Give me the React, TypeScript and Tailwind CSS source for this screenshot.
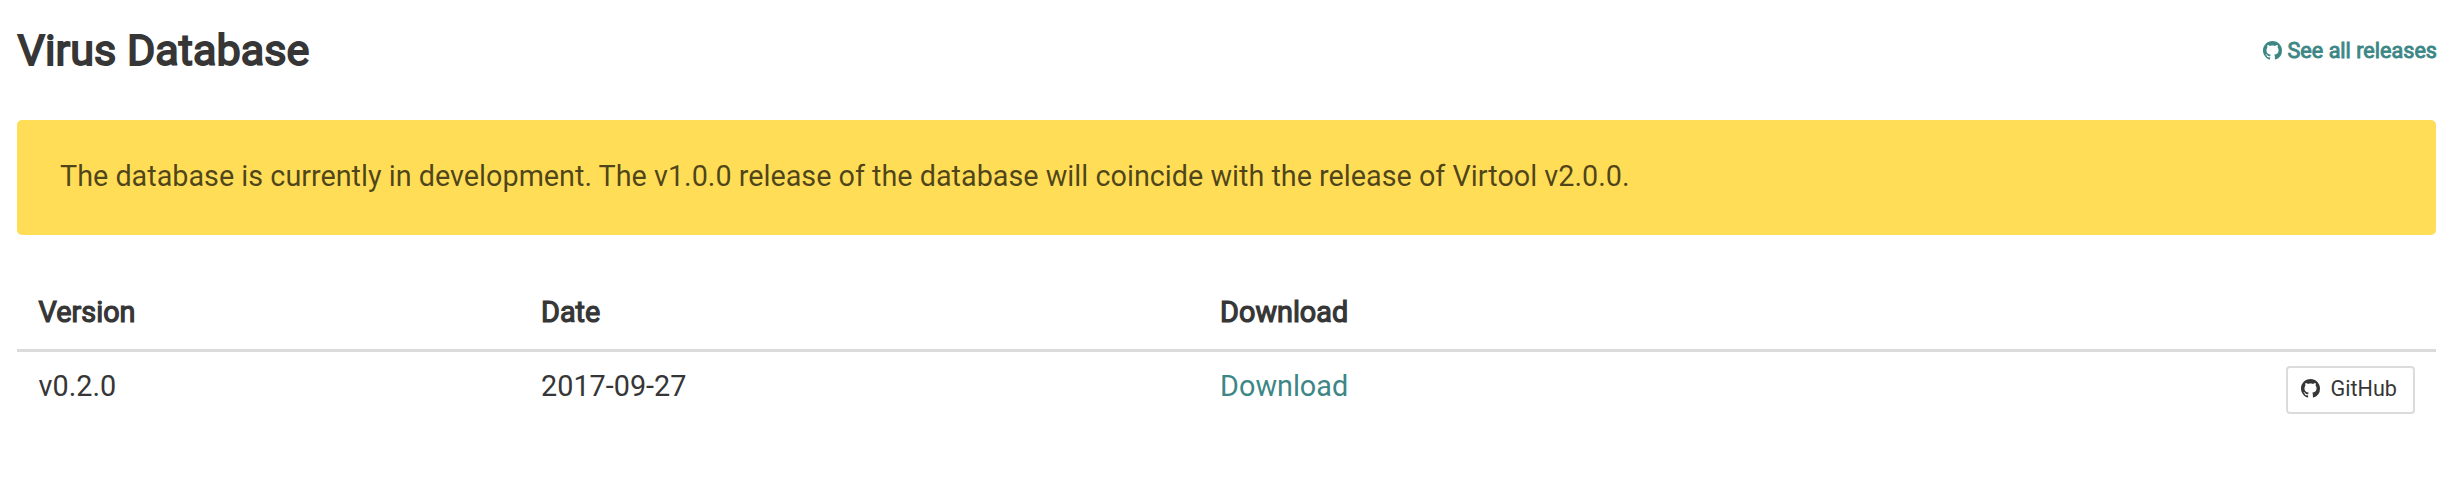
import React from "react";

const Mark = ({ className }: { className: string }) => (
  <svg viewBox="0 0 16 16" fill="currentColor" className={className}>
    <path d="M8 0C3.580 0 0 3.580 0 8c0 3.540 2.290 6.530 5.470 7.590.4.070.550-.170.550-.380 0-.190-.010-.820-.010-1.490-2.010.370-2.530-.490-2.690-.940-.090-.230-.480-.940-.820-1.130-.280-.150-.680-.520-.010-.530.630-.010 1.080.580 1.230.820.720 1.210 1.870.870 2.330.660.070-.520.280-.870.510-1.070-1.780-.2-3.640-.890-3.640-3.950 0-.870.310-1.590.820-2.150-.080-.2-.360-1.020.080-2.120 0 0 .670-.210 2.200.820.640-.180 1.320-.270 2-.270s1.360.090 2 .270c1.530-1.040 2.200-.820 2.200-.820.440 1.100.160 1.920.080 2.120.510.560.820 1.270.820 2.150 0 3.070-1.870 3.750-3.650 3.950.290.250.540.730.540 1.480 0 1.070-.010 1.930-.010 2.200 0 .210.150.460.550.380A8.013 8.013 0 0 0 16 8c0-4.420-3.580-8-8-8z" />
  </svg>
);

export default function App() {
  return (
    <div className="h-[479px] bg-white pr-[21px] pl-[17px] font-[Roboto,sans-serif] text-[28.78px] text-[#363636]">
      <header className="flex h-[120px] justify-between">
        <h1 className="pt-[23px] pl-[0.5px] text-[43.2px] leading-[56px] [-webkit-text-stroke:1.8px_currentColor]">Virus Database</h1>
        <a className="-mr-px flex h-[102px] items-center text-[21.6px] text-[#3c8786]">
          <Mark className="mr-[6px] mb-[1px] size-[19px]" />
          <span className="[-webkit-text-stroke:0.9px_currentColor]">See all releases</span>
        </a>
      </header>
      <div className="flex h-[115px] items-center rounded-[5px] bg-[#ffdd57] px-[43px] pb-[2px] text-black/70">
        The database is currently in development. The v1.0.0 release of the database will coincide with the release of Virtool v2.0.0.
      </div>
      <table className="mt-[43px] w-full table-fixed border-collapse text-left">
        <colgroup>
          <col className="w-[502.5px]" />
          <col className="w-[679px]" />
          <col className="w-[679px]" />
          <col />
        </colgroup>
        <thead>
          <tr className="h-[72px] border-b-[3px] border-[#dbdbdb] align-top leading-[43px] [-webkit-text-stroke:1.2px_currentColor]">
            <th className="px-[21.6px] pt-[13px] font-normal">Version</th>
            <th className="px-[21.6px] pt-[13px] font-normal">Date</th>
            <th className="px-[21.6px] pt-[13px] font-normal">Download</th>
            <th />
          </tr>
        </thead>
        <tbody>
          <tr className="align-top leading-[43px]">
            <td className="px-[21.6px] pt-[13px]">v0.2.0</td>
            <td className="px-[21.6px] pt-[13px]">2017-09-27</td>
            <td className="px-[21.6px] pt-[13px] text-[#3c8786]">Download</td>
            <td className="pt-[14px] pr-[21px]">
              <a className="ml-auto flex h-[48px] w-[129px] items-center rounded-[4px] border-2 border-[#dbdbdb] pb-[2px] pl-[13px] text-[21.6px]">
                <Mark className="mr-[10.5px] size-[19px]" />
                <span>GitHub</span>
              </a>
            </td>
          </tr>
        </tbody>
      </table>
    </div>
  );
}
